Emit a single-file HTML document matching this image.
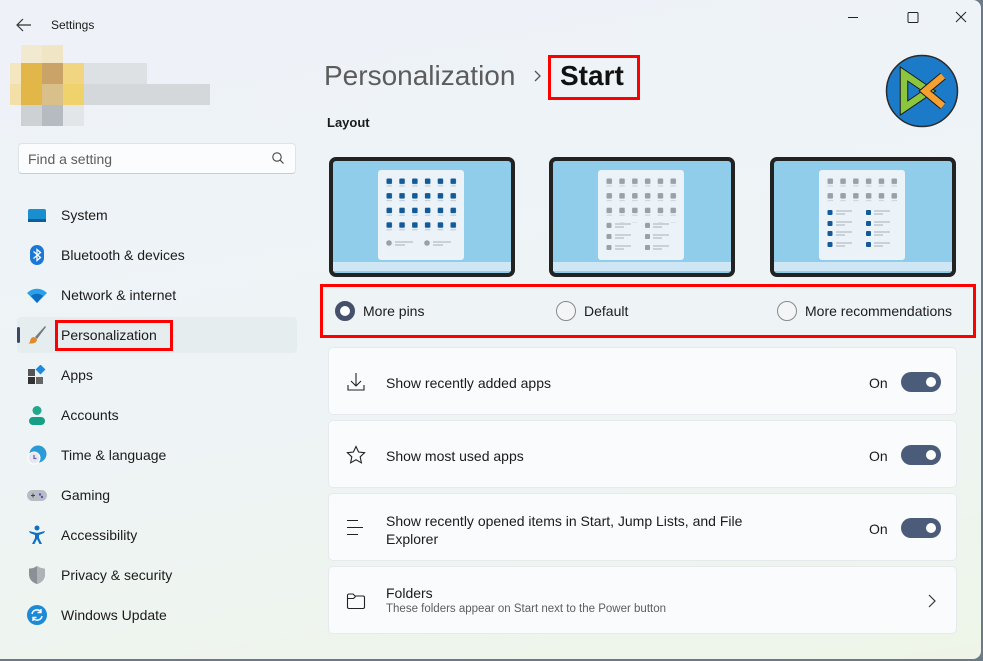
<!DOCTYPE html>
<html><head><meta charset="utf-8"><style>
*{margin:0;padding:0;box-sizing:border-box}
body{width:983px;height:661px;overflow:hidden;background:#6b7a86;font-family:"Liberation Sans",sans-serif;color:#1a1a1a;position:relative}
#win{position:absolute;left:0;top:0;width:981px;height:659px;border-radius:0 8px 8px 0;background:linear-gradient(170deg,#eef2f8 0%,#eef4f6 55%,#eef5e8 100%);overflow:hidden}
.abs{position:absolute}
.nav{position:absolute;left:61px;font-size:14px;color:#1b1b1b}
.ic{position:absolute;left:27px;width:20px;height:20px}
.card{position:absolute;left:328px;width:629px;background:#f9fbfc;border:1px solid #e6eaee;border-radius:5px}
.card .t{position:absolute;left:57px;font-size:14px;color:#1b1b1b}
.on{position:absolute;left:540px;font-size:14px;color:#1b1b1b}
.tg{position:absolute;left:572px;width:40px;height:20px;border-radius:10px;background:#4a5c7a}
.tg::after{content:"";position:absolute;right:5px;top:5px;width:10px;height:10px;border-radius:50%;background:#fff}
.red{position:absolute;border:3px solid #f00}
.radio{position:absolute;width:20px;height:20px;border-radius:50%;border:1px solid #8a8a8a;background:#f3f5f7}
.rl{position:absolute;font-size:14px;color:#1b1b1b}
</style></head><body>
<div id="win">
<svg class="abs" style="left:16px;top:18px" width="16" height="14"><path d="M15 7H2M7 1L1 7l6 6" stroke="#333" fill="none" stroke-width="1.2"/></svg>
<div class="abs" style="left:51px;top:18px;font-size:12px">Settings</div>
<svg class="abs" style="left:848px;top:10px" width="130" height="16"><path d="M0 7.5h10" stroke="#222"/><rect x="60" y="2.5" width="10" height="10" rx="1" fill="none" stroke="#222"/><path d="M108 2l10 10M118 2l-10 10" stroke="#222"/></svg>
<div class="abs" style="left:10px;top:45px;width:200px;height:82px">
<div class="abs" style="left:11px;top:0;width:21px;height:18px;background:#f2ead0"></div>
<div class="abs" style="left:32px;top:0;width:21px;height:18px;background:#f0e6c6"></div>
<div class="abs" style="left:0;top:18px;width:11px;height:21px;background:#f4e6c0"></div>
<div class="abs" style="left:11px;top:18px;width:21px;height:21px;background:#e3b64a"></div>
<div class="abs" style="left:32px;top:18px;width:21px;height:21px;background:#c9a368"></div>
<div class="abs" style="left:53px;top:18px;width:21px;height:21px;background:#f2d580"></div>
<div class="abs" style="left:74px;top:18px;width:63px;height:21px;background:#dde1e3"></div>
<div class="abs" style="left:0;top:39px;width:11px;height:21px;background:#f3e0a8"></div>
<div class="abs" style="left:11px;top:39px;width:21px;height:21px;background:#e2b647"></div>
<div class="abs" style="left:32px;top:39px;width:21px;height:21px;background:#d9c08a"></div>
<div class="abs" style="left:53px;top:39px;width:21px;height:21px;background:#f0d26c"></div>
<div class="abs" style="left:74px;top:39px;width:126px;height:21px;background:#d4d8db"></div>
<div class="abs" style="left:11px;top:60px;width:21px;height:21px;background:#cdd1d4"></div>
<div class="abs" style="left:32px;top:60px;width:21px;height:21px;background:#b5bbc0"></div>
<div class="abs" style="left:53px;top:60px;width:21px;height:21px;background:#e2e6e8"></div>
</div>
<div class="abs" style="left:18px;top:143px;width:278px;height:31px;background:#fbfcfd;border:1px solid #e0e3e6;border-bottom-color:#c8ccd0;border-radius:4px"></div>
<div class="abs" style="left:28px;top:151px;font-size:14px;color:#5d5d5d">Find a setting</div>
<svg class="abs" style="left:271px;top:151px" width="14" height="14"><circle cx="6" cy="6" r="4.2" fill="none" stroke="#444" stroke-width="1.1"/><path d="M9 9l3.5 3.5" stroke="#444" stroke-width="1.2"/></svg>
<div class="abs" style="left:17px;top:317px;width:280px;height:36px;background:#e6edef;border-radius:4px"></div>
<div class="abs" style="left:17px;top:327px;width:3px;height:16px;background:#3b4a62;border-radius:2px"></div>
<svg class="ic" style="top:206px" viewBox="0 0 20 20"><rect x="1" y="3" width="18" height="13" rx="2" fill="#1a8fd0"/><rect x="1" y="13" width="18" height="3" fill="#0b5f96"/></svg>
<div class="nav" style="top:207px">System</div>
<svg class="ic" style="top:245px" viewBox="0 0 20 20"><rect x="3" y="0" width="14" height="20" rx="7" fill="#1b78d4"/><path d="M6.5 6.5l7 6-3.5 3V4.5l3.5 3-7 6" stroke="#fff" fill="none" stroke-width="1.3"/></svg>
<div class="nav" style="top:247px">Bluetooth &amp; devices</div>
<svg class="ic" style="top:285px" viewBox="0 0 20 20"><path d="M0 8a14 14 0 0 1 20 0L10 18z" fill="#2aa0e8"/><path d="M4 11a9 9 0 0 1 12 0L10 18z" fill="#0e6cc0"/></svg>
<div class="nav" style="top:287px">Network &amp; internet</div>
<svg class="ic" style="top:325px" viewBox="0 0 20 20"><path d="M18 1L8 12l2 2L19 2z" fill="#7a7a7a"/><path d="M7 12c-3 0-4 3-4 5-1 1-2 1-2 1 3 1 9 1 9-4z" fill="#e08a2a"/></svg>
<div class="nav" style="top:327px">Personalization</div>
<div class="red" style="left:55px;top:320px;width:118px;height:31px"></div>
<svg class="ic" style="top:365px" viewBox="0 0 20 20"><rect x="1" y="4" width="7" height="7" fill="#555"/><rect x="1" y="12" width="7" height="7" fill="#333"/><rect x="9" y="12" width="7" height="7" fill="#666"/><rect x="10" y="1" width="7" height="7" transform="rotate(45 13.5 4.5)" fill="#1d8ae0"/></svg>
<div class="nav" style="top:367px">Apps</div>
<svg class="ic" style="top:405px" viewBox="0 0 20 20"><circle cx="10" cy="5.5" r="4.5" fill="#1fa88a"/><path d="M2 16a4 4 0 0 1 4-4h8a4 4 0 0 1 4 4v0a4 4 0 0 1-4 4H6a4 4 0 0 1-4-4z" fill="#15a085"/></svg>
<div class="nav" style="top:407px">Accounts</div>
<svg class="ic" style="top:445px" viewBox="0 0 20 20"><circle cx="11" cy="9" r="8.5" fill="#2b9bd8"/><circle cx="7" cy="13" r="6" fill="#e6e8f0" stroke="#fff"/><path d="M7 10v3.5h2.5" stroke="#6c5fb0" fill="none" stroke-width="1.3"/></svg>
<div class="nav" style="top:447px">Time &amp; language</div>
<svg class="ic" style="top:485px" viewBox="0 0 20 20"><rect x="0" y="5" width="20" height="11" rx="5.5" fill="#b8bcc4"/><path d="M4 10.5h4M6 8.5v4" stroke="#444"/><circle cx="13" cy="9.5" r="1.2" fill="#4a5ab0"/><circle cx="15" cy="12" r="1.2" fill="#4a5ab0"/></svg>
<div class="nav" style="top:487px">Gaming</div>
<svg class="ic" style="top:525px" viewBox="0 0 20 20"><circle cx="10" cy="3" r="2.5" fill="#1170c0"/><path d="M2 6l8 2 8-2-1 2-5 2v3l3 6h-2.5L10 14l-2.5 5H5l3-6v-3L3 8z" fill="#1170c0"/></svg>
<div class="nav" style="top:527px">Accessibility</div>
<svg class="ic" style="top:565px" viewBox="0 0 20 20"><path d="M10 1c3 2 5 2.5 8 2.5v6c0 5-4 8.5-8 9.5C6 18 2 14.5 2 9.5v-6C5 3.5 7 3 10 1z" fill="#8b9096"/><path d="M10 1c3 2 5 2.5 8 2.5v6c0 5-4 8.5-8 9.5z" fill="#aeb3b8"/></svg>
<div class="nav" style="top:567px">Privacy &amp; security</div>
<svg class="ic" style="top:605px" viewBox="0 0 20 20"><circle cx="10" cy="10" r="10" fill="#1c8ad6"/><path d="M5 9a5 5 0 0 1 9-2M15 11a5 5 0 0 1-9 2" stroke="#fff" fill="none" stroke-width="1.5"/><path d="M14 4v3.5h-3.5M6 16v-3.5h3.5" stroke="#fff" fill="none" stroke-width="1.4"/></svg>
<div class="nav" style="top:607px">Windows Update</div>
<div class="abs" style="left:324px;top:60px;font-size:28px;color:#5c5c5c">Personalization</div>
<svg class="abs" style="left:533px;top:70px" width="10" height="12"><path d="M2 1l5 5-5 5" stroke="#555" fill="none" stroke-width="1.3"/></svg>
<div class="abs" style="left:560px;top:60px;font-size:28px;font-weight:bold;color:#111">Start</div>
<div class="red" style="left:548px;top:55px;width:92px;height:45px"></div>
<svg class="abs" style="left:885px;top:54px" width="74" height="74" viewBox="0 0 74 74"><circle cx="37" cy="37" r="35.5" fill="#1b7bc8" stroke="#2a2a2a" stroke-width="1.5"/>
<path d="M19 20L44 37 19 54z" fill="none" stroke="#1a1a1a" stroke-width="8.5" stroke-linejoin="miter"/><path d="M19 20L44 37 19 54z" fill="none" stroke="#8cc63f" stroke-width="6.5"/>
<path d="M58 22L40 37 58 52" fill="none" stroke="#1a1a1a" stroke-width="8.5"/><path d="M58 22L40 37 58 52" fill="none" stroke="#f5a030" stroke-width="6.5"/></svg>
<div class="abs" style="left:327px;top:115px;font-size:13px;font-weight:bold">Layout</div>
<svg class="abs" style="left:329px;top:157px" width="186" height="120"><defs>
<pattern id="pb" width="12.8" height="14.6" patternUnits="userSpaceOnUse" x="57.5" y="21.5"><rect width="5.5" height="5.5" rx="1" fill="#135a98"/><rect y="7" width="5.5" height="1" fill="#b9c7d4"/></pattern>
</defs>
<rect x="2" y="2" width="182" height="116" rx="5" fill="#90cdea" stroke="#222" stroke-width="4"/><rect x="4" y="105" width="178" height="9" fill="#cfe6f4"/>
<rect x="49" y="13" width="86" height="90" rx="3" fill="#ebf3f9"/><rect x="57.5" y="21.5" width="72" height="58" fill="url(#pb)"/>
<circle cx="60" cy="86" r="2.8" fill="#9aa0a6"/><path d="M66 85h18M66 88h10" stroke="#a9b0b6"/><circle cx="98" cy="86" r="2.8" fill="#9aa0a6"/><path d="M104 85h18M104 88h10" stroke="#a9b0b6"/></svg>
<svg class="abs" style="left:549px;top:157px" width="186" height="120"><defs>
<pattern id="pg2" width="12.8" height="14.6" patternUnits="userSpaceOnUse" x="57.5" y="21.5"><rect width="5.5" height="5.5" rx="1" fill="#9aa0a6"/><rect y="7" width="5.5" height="1" fill="#c9d0d6"/></pattern></defs>
<rect x="2" y="2" width="182" height="116" rx="5" fill="#90cdea" stroke="#222" stroke-width="4"/><rect x="4" y="105" width="178" height="9" fill="#cfe6f4"/>
<rect x="49" y="13" width="86" height="90" rx="3" fill="#ebf3f9"/><rect x="57.5" y="21.5" width="72" height="44" fill="url(#pg2)"/>
<g fill="#9aa0a6"><rect x="57.5" y="66" width="5" height="5" rx="1"/><rect x="57.5" y="77" width="5" height="5" rx="1"/><rect x="57.5" y="88" width="5" height="5" rx="1"/><rect x="96" y="66" width="5" height="5" rx="1"/><rect x="96" y="77" width="5" height="5" rx="1"/><rect x="96" y="88" width="5" height="5" rx="1"/></g>
<path d="M66 67h16M66 70h9M66 78h16M66 81h9M66 89h16M66 92h9M104 67h16M104 70h9M104 78h16M104 81h9M104 89h16M104 92h9" stroke="#a9b0b6"/></svg>
<svg class="abs" style="left:770px;top:157px" width="186" height="120"><defs>
<pattern id="pg3" width="12.8" height="14.6" patternUnits="userSpaceOnUse" x="57.5" y="21.5"><rect width="5.5" height="5.5" rx="1" fill="#9aa0a6"/><rect y="7" width="5.5" height="1" fill="#c9d0d6"/></pattern></defs>
<rect x="2" y="2" width="182" height="116" rx="5" fill="#90cdea" stroke="#222" stroke-width="4"/><rect x="4" y="105" width="178" height="9" fill="#cfe6f4"/>
<rect x="49" y="13" width="86" height="90" rx="3" fill="#ebf3f9"/><rect x="57.5" y="21.5" width="72" height="29" fill="url(#pg3)"/>
<g fill="#135a98"><rect x="57.5" y="53" width="5" height="5" rx="1"/><rect x="57.5" y="64" width="5" height="5" rx="1"/><rect x="57.5" y="74" width="5" height="5" rx="1"/><rect x="57.5" y="85" width="5" height="5" rx="1"/><rect x="96" y="53" width="5" height="5" rx="1"/><rect x="96" y="64" width="5" height="5" rx="1"/><rect x="96" y="74" width="5" height="5" rx="1"/><rect x="96" y="85" width="5" height="5" rx="1"/></g>
<path d="M66 54h16M66 57h9M66 65h16M66 68h9M66 75h16M66 78h9M66 86h16M66 89h9M104 54h16M104 57h9M104 65h16M104 68h9M104 75h16M104 78h9M104 86h16M104 89h9" stroke="#a9b0b6"/></svg>
<div class="radio" style="left:335px;top:301px;border:5px solid #46506a;background:#fff"></div>
<div class="rl" style="left:363px;top:303px">More pins</div>
<div class="radio" style="left:556px;top:301px"></div>
<div class="rl" style="left:584px;top:303px">Default</div>
<div class="radio" style="left:777px;top:301px"></div>
<div class="rl" style="left:805px;top:303px">More recommendations</div>
<div class="red" style="left:320px;top:284px;width:656px;height:54px"></div>
<div class="card" style="top:347px;height:68px">
<svg class="abs" style="left:17px;top:24px" width="20" height="20"><path d="M10 1v13M5 9l5 5 5-5M2 13v5h16v-5" stroke="#222" fill="none" stroke-width="1.1"/></svg>
<div class="t" style="top:27px">Show recently added apps</div><div class="on" style="top:27px">On</div><div class="tg" style="top:24px"></div></div>
<div class="card" style="top:420px;height:68px">
<svg class="abs" style="left:17px;top:24px" width="20" height="20"><path d="M10 1.5l2.6 5.5 6 .7-4.4 4.1 1.2 6L10 14.8 4.6 17.8l1.2-6L1.4 7.7l6-.7z" stroke="#222" fill="none" stroke-width="1.1"/></svg>
<div class="t" style="top:27px">Show most used apps</div><div class="on" style="top:27px">On</div><div class="tg" style="top:24px"></div></div>
<div class="card" style="top:493px;height:68px">
<svg class="abs" style="left:17px;top:24px" width="20" height="20"><path d="M1 2.5h11M1 9.5h16M1 16.5h11" stroke="#222" stroke-width="1.1"/></svg>
<div class="t" style="top:18px;line-height:18px">Show recently opened items in Start, Jump Lists, and File<br>Explorer</div><div class="on" style="top:27px">On</div><div class="tg" style="top:24px"></div></div>
<div class="card" style="top:566px;height:68px">
<svg class="abs" style="left:17px;top:24px" width="20" height="20"><path d="M1.5 4.5a1.5 1.5 0 0 1 1.5-1.5h4l2 2h8a1.5 1.5 0 0 1 1.5 1.5v9.5a1.5 1.5 0 0 1-1.5 1.5H3a1.5 1.5 0 0 1-1.5-1.5zM1.5 7.5h6l2-2" stroke="#222" fill="none" stroke-width="1.1"/></svg>
<div class="t" style="top:18px">Folders</div>
<div class="t" style="top:36px;font-size:11.5px;color:#5d5d5d">These folders appear on Start next to the Power button</div>
<svg class="abs" style="left:598px;top:27px" width="10" height="14"><path d="M2 1l6 6-6 6" stroke="#333" fill="none" stroke-width="1.2"/></svg></div>
</div>
</body></html>
